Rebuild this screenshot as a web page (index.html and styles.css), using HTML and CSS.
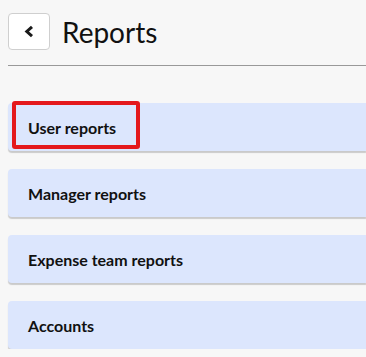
FILE: index.html
```html
<!DOCTYPE html>
<html lang="en">
<head>
  <meta charset="UTF-8">
  <title>Reports</title>
  <link rel="stylesheet" href="styles.css">
</head>
<body>
  <div class="page">
    <div class="header">
      <button class="back-btn" aria-label="Back">
        <svg width="12" height="13" viewBox="0 0 12 13">
          <path d="M9 1.8 L3.8 6.5 L9 11.2" fill="none" stroke="#1a1a1a" stroke-width="3"/>
        </svg>
      </button>
      <h1 class="title">Reports</h1>
    </div>
    <hr class="rule">

    <div class="report-list">
      <div class="report-card highlighted">
        User reports
        <span class="mark"></span>
      </div>
      <div class="report-card">Manager reports</div>
      <div class="report-card">Expense team reports</div>
      <div class="report-card">Accounts</div>
    </div>
  </div>
</body>
</html>
```

FILE: styles.css
```css
body {
  margin: 0;
  background: #f7f7f7;
  font-family: Lato, 'Open Sans', sans-serif;
  color: #111;
  overflow: hidden;
}
.page {
  padding: 13px 0 0 8px;
}
.header {
  display: flex;
  align-items: center;
  gap: 12px;
}
.back-btn {
  width: 42px;
  height: 37px;
  background: #fff;
  border: 1px solid #cfcfcf;
  border-radius: 4px;
  display: flex;
  align-items: center;
  justify-content: center;
  padding: 0;
}
.title {
  margin: 0;
  font-size: 28px;
  font-weight: 400;
  color: #111;
}
.rule {
  margin: 15px 0 0 0;
  border: none;
  border-top: 1px solid #999;
}
.report-list {
  margin-top: 37px;
  display: flex;
  flex-direction: column;
  gap: 18px;
}
.report-card {
  position: relative;
  height: 48px;
  display: flex;
  align-items: center;
  padding-left: 20px;
  background: #dce6fd;
  border-radius: 4px 0 0 4px;
  box-shadow: 0 2px 1px rgba(0,0,0,0.18);
  font-size: 16px;
  font-weight: 700;
  color: #111;
}
.mark {
  position: absolute;
  left: 4px;
  top: -2px;
  width: 128px;
  height: 48px;
  box-sizing: border-box;
  border: 4px solid #e4181c;
  border-radius: 3px;
}
```
